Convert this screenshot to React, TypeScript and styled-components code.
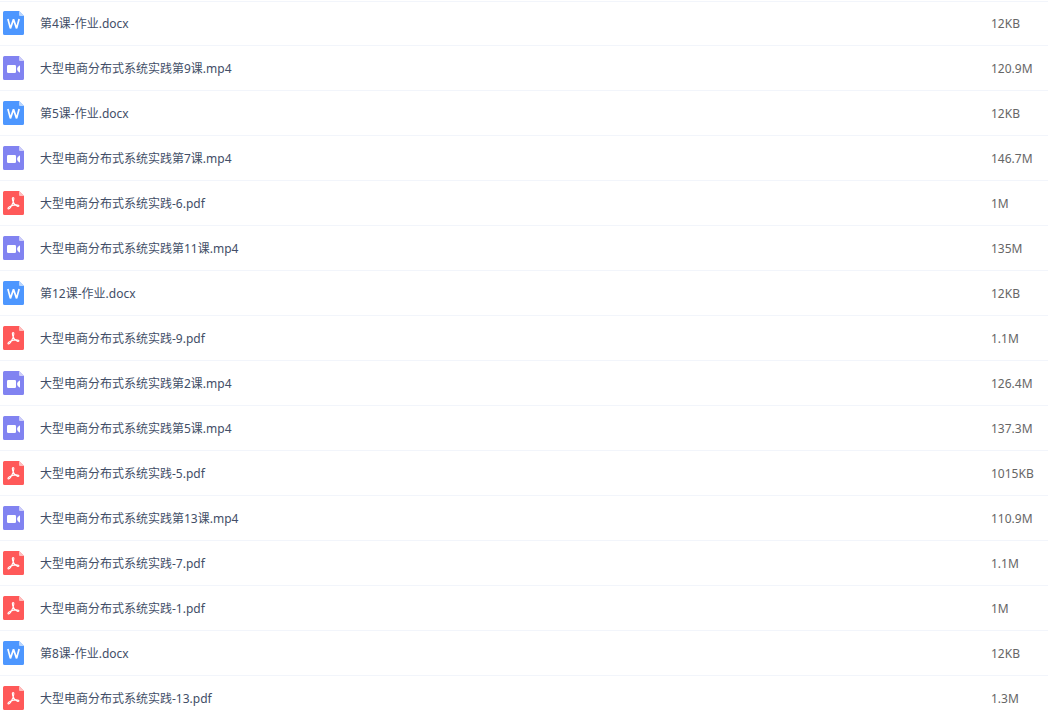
import React from "react";
import styled, { createGlobalStyle } from "styled-components";

type Kind = "docx" | "mp4" | "pdf";

const GlobalStyle = createGlobalStyle`
  body {
    margin: 0;
    background: #fff;
    font-family: "Noto Sans", "Noto Sans CJK SC", sans-serif;
    font-size: 12px;
    line-height: 18px;
  }
`;

const FileTable = styled.table`
  width: 100%;
  margin-top: 1px;
  table-layout: fixed;
  border-spacing: 0;
  box-shadow: inset 0 1px #f2f5fb;
`;

const FileRow = styled.tr`
  height: 45px;
`;

const Cell = styled.td`
  box-sizing: border-box;
  height: 45px;
  padding: 0;
  border-bottom: 1px solid #f2f5fb;
  vertical-align: middle;
  white-space: nowrap;
`;

const NameCell = styled(Cell)`
  color: #424e67;
`;

const SizeCell = styled(Cell)`
  width: 57px;
  color: #666;
`;

const FileInfo = styled.div`
  display: flex;
  align-items: center;
  gap: 16px;
  padding-left: 3px;
`;

const Label = styled.span`
  display: block;
  padding-top: 2px;
`;

const Icon = styled.svg`
  flex: none;
  display: block;
  width: 21px;
  height: 24px;
`;

const palette: Record<Kind, { base: string; fold: string }> = {
  docx: { base: "#4d97ff", fold: "#b8d5ff" },
  mp4: { base: "#8183f1", fold: "#cdcdf9" },
  pdf: { base: "#ff5959", fold: "#ffbdbd" },
};

function FileIcon({ kind }: { kind: Kind }) {
  const { base, fold } = palette[kind];
  return (
    <Icon viewBox="0 0 21 24" aria-hidden="true">
      <path d="M1.5 0H16l5 5v17.5a1.5 1.5 0 0 1-1.5 1.5h-18A1.5 1.5 0 0 1 0 22.5v-21A1.5 1.5 0 0 1 1.5 0z" fill={base} />
      <path d="M16 0l5 5h-4a1 1 0 0 1-1-1z" fill={fold} />
      {kind === "docx" && (
        <path d="M4.9 8l2.5 9.4 3.1-9 3.1 9L16.1 8" fill="none" stroke="#fff" strokeWidth="1.7" strokeLinejoin="bevel" />
      )}
      {kind === "mp4" && (
        <>
          <rect x="4" y="9" width="9" height="8" rx="1.3" fill="#fff" />
          <path d="M17 9.2v7.6q-3-1.400-3-3.800t3-3.800z" fill="#fff" />
        </>
      )}
      {kind === "pdf" && (
        <path
          d="M10.2 6.6c-1.2 0-1 1.7-.1 4.1.7 2 2.4 3.8 4.3 4.6 1.3.5 2-.5 1-1-1.5-.7-5.2-.2-8 1-1.8.8-2.9 1.900-2.3 2.500.8.7 2.2-.8 3.4-3.100 1.3-2.500 2.400-5.600 2.400-7 0-.7-.2-1.100-.7-1.100z"
          fill="none"
          stroke="#fff"
          strokeWidth="1.1"
          strokeLinejoin="round"
        />
      )}
    </Icon>
  );
}

const files: { name: string; kind: Kind; size: string }[] = [
  { name: "第4课-作业.docx", kind: "docx", size: "12KB" },
  { name: "大型电商分布式系统实践第9课.mp4", kind: "mp4", size: "120.9M" },
  { name: "第5课-作业.docx", kind: "docx", size: "12KB" },
  { name: "大型电商分布式系统实践第7课.mp4", kind: "mp4", size: "146.7M" },
  { name: "大型电商分布式系统实践-6.pdf", kind: "pdf", size: "1M" },
  { name: "大型电商分布式系统实践第11课.mp4", kind: "mp4", size: "135M" },
  { name: "第12课-作业.docx", kind: "docx", size: "12KB" },
  { name: "大型电商分布式系统实践-9.pdf", kind: "pdf", size: "1.1M" },
  { name: "大型电商分布式系统实践第2课.mp4", kind: "mp4", size: "126.4M" },
  { name: "大型电商分布式系统实践第5课.mp4", kind: "mp4", size: "137.3M" },
  { name: "大型电商分布式系统实践-5.pdf", kind: "pdf", size: "1015KB" },
  { name: "大型电商分布式系统实践第13课.mp4", kind: "mp4", size: "110.9M" },
  { name: "大型电商分布式系统实践-7.pdf", kind: "pdf", size: "1.1M" },
  { name: "大型电商分布式系统实践-1.pdf", kind: "pdf", size: "1M" },
  { name: "第8课-作业.docx", kind: "docx", size: "12KB" },
  { name: "大型电商分布式系统实践-13.pdf", kind: "pdf", size: "1.3M" },
];

export default function App() {
  return (
    <>
      <GlobalStyle />
      <FileTable>
        <tbody>
          {files.map((file) => (
            <FileRow key={file.name}>
              <NameCell>
                <FileInfo>
                  <FileIcon kind={file.kind} />
                  <Label>{file.name}</Label>
                </FileInfo>
              </NameCell>
              <SizeCell>
                <Label>{file.size}</Label>
              </SizeCell>
            </FileRow>
          ))}
        </tbody>
      </FileTable>
    </>
  );
}
